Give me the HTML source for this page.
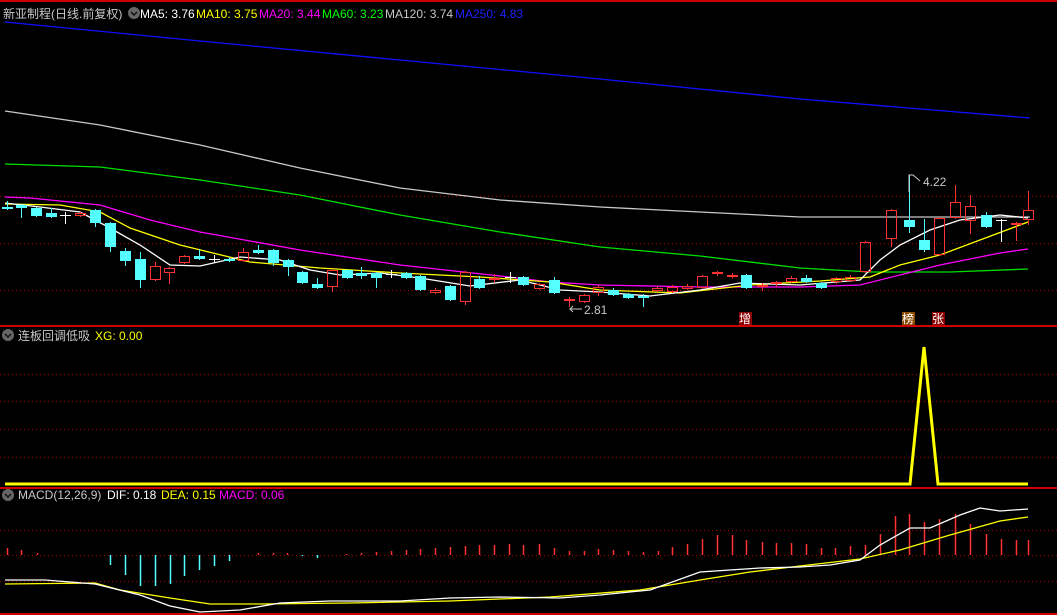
<!DOCTYPE html>
<html><head><meta charset="utf-8">
<style>
html,body{margin:0;padding:0;background:#000;width:1057px;height:615px;overflow:hidden}
svg{display:block}
text{font-family:"Liberation Sans","Noto Sans CJK SC",sans-serif;font-size:12px}
</style></head>
<body>
<svg id="s" width="1057" height="615" xmlns="http://www.w3.org/2000/svg">
<rect width="1057" height="615" fill="#000"/>
<g stroke="#a00" stroke-width="1" stroke-dasharray="1,3">
<line x1="0" y1="196.5" x2="1057" y2="196.5"/>
<line x1="0" y1="243.5" x2="1057" y2="243.5"/>
<line x1="0" y1="290.5" x2="1057" y2="290.5"/>
<line x1="0" y1="374.5" x2="1057" y2="374.5"/>
<line x1="0" y1="401.5" x2="1057" y2="401.5"/>
<line x1="0" y1="429.5" x2="1057" y2="429.5"/>
<line x1="0" y1="457.5" x2="1057" y2="457.5"/>
<line x1="0" y1="530.5" x2="1057" y2="530.5"/>
<line x1="0" y1="555.5" x2="1057" y2="555.5"/>
<line x1="0" y1="581.5" x2="1057" y2="581.5"/>
</g>
<g stroke="#c00" stroke-width="2">
<line x1="0" y1="1" x2="1057" y2="1"/>
<line x1="0" y1="326" x2="1057" y2="326"/>
<line x1="0" y1="488" x2="1057" y2="488"/>
<line x1="0" y1="614" x2="1057" y2="614"/>
</g>
<g fill="none" stroke-width="1.3">
<polyline stroke="#1010ff" points="5,22 200,41 400,60 600,79 800,99 1030,118"/>
<polyline stroke="#c8c8c8" points="5,111 100,125 200,145 300,168 400,188 500,200 600,207 700,212 800,217 900,217 1030,217"/>
<polyline stroke="#00e000" points="5,164 100,167 200,180 300,195 400,215 500,232 600,247 700,256 800,268 870,272 950,272 1028,269"/>
<polyline stroke="#ff00ff" points="5,197 30,198 100,205 150,220 200,232 300,250 400,265 500,276 550,282 600,285 700,287 800,287 860,285 900,275 940,265 1000,253 1028,249"/>
<polyline stroke="#ffff00" points="5,204 60,205 100,212 130,228 180,245 250,262 320,268 400,273 480,277 550,282 600,290 680,293 750,285 820,281 870,277 900,265 940,255 980,240 1028,222"/>
<polyline stroke="#ffffff" points="5,203 40,207 80,212 110,228 140,245 170,265 200,266 240,257 280,260 310,270 340,275 380,273 420,278 470,286 520,280 560,290 600,292 650,296 700,290 740,283 800,285 860,280 880,260 900,245 930,230 960,220 1000,215 1028,218"/>
</g>
<g id="candles"></g>
<g fill="none" stroke="#c8c8c8">
<polyline points="909,192 909,175 913,175 920,181"/>
<polyline points="582,309 570,309 573,306 570,309 573,312"/>
</g>
<text x="923" y="186" fill="#c8c8c8">4.22</text>
<text x="584" y="314" fill="#c8c8c8">2.81</text>
<rect x="739" y="312" width="13" height="13" fill="#8b0000"/>
<text x="739" y="323" fill="#fff">增</text>
<rect x="902" y="312" width="13" height="13" fill="#8b4a00"/>
<text x="902" y="323" fill="#fff">榜</text>
<rect x="932" y="312" width="13" height="13" fill="#8b0000"/>
<text x="932" y="323" fill="#fff">张</text>
<polyline fill="none" stroke="#ffff00" stroke-width="3" points="5,484 910,484 924,347 938,484 1028,484"/>
<g id="macd"></g>
<polyline fill="none" stroke="#ffff00" stroke-width="1.3" points="5,584 95,583 120,590 170,598 210,604 260,604 350,603 450,601 550,597 640,590 700,580 750,572 800,566 860,559 900,550 950,535 1000,521 1028,517"/>
<polyline fill="none" stroke="#ffffff" stroke-width="1.3" points="5,580 45,580 95,584 140,595 170,606 200,612 240,610 280,603 330,601 400,601 450,598 500,597 560,598 600,595 650,590 700,572 760,568 800,567 830,565 860,560 880,545 910,528 930,528 960,515 980,508 1000,511 1028,509"/>
<g>
<circle cx="134" cy="13" r="6" fill="#666"/><path d="M131 12 L134 15 L137 12" stroke="#111" fill="none" stroke-width="1.5"/>
<circle cx="8" cy="335" r="6" fill="#666"/><path d="M5 334 L8 337 L11 334" stroke="#111" fill="none" stroke-width="1.5"/>
<circle cx="8" cy="495" r="6" fill="#666"/><path d="M5 494 L8 497 L11 494" stroke="#111" fill="none" stroke-width="1.5"/>
</g>
<text x="3" y="18" fill="#c8c8c8">新亚制程(日线.前复权)</text>
<text x="140" y="18" fill="#fff">MA5: 3.76</text>
<text x="196" y="18" fill="#ffff00">MA10: 3.75</text>
<text x="259" y="18" fill="#ff00ff">MA20: 3.44</text>
<text x="322" y="18" fill="#00ff00">MA60: 3.23</text>
<text x="385" y="18" fill="#c8c8c8">MA120: 3.74</text>
<text x="455" y="18" fill="#2020ff">MA250: 4.83</text>
<text x="18" y="340" fill="#c8c8c8">连板回调低吸</text>
<text x="95" y="340" fill="#ffff00">XG: 0.00</text>
<text x="18" y="499" fill="#c8c8c8">MACD(12,26,9)</text>
<text x="107" y="499" fill="#fff">DIF: 0.18</text>
<text x="161" y="499" fill="#ffff00">DEA: 0.15</text>
<text x="219" y="499" fill="#ff00ff">MACD: 0.06</text>
</svg>
<script>
var NS="http://www.w3.org/2000/svg";
// x, top, bottom, high, low, type(c=cyan,r=red,x=cross)
var C=[
[7,207,209,201,210,'c'],[21,205,208,204,218,'c'],[36,208,216,207,217,'c'],[51,213,217,208,218,'c'],[65,215,215,212,224,'x'],
[80,213,216,212,217,'r'],[95,210,223,209,227,'c'],[110,223,247,222,252,'c'],[125,251,261,248,266,'c'],[140,259,280,252,288,'c'],
[155,266,280,262,281,'r'],[169,268,273,267,284,'r'],[184,256,263,255,264,'r'],[199,256,259,249,260,'c'],[214,259,259,255,263,'x'],
[229,259,260,257,262,'c'],[243,252,261,248,262,'r'],[258,250,253,245,254,'c'],[273,250,263,249,266,'c'],[288,260,267,259,276,'c'],
[302,272,283,271,284,'c'],[317,284,288,278,289,'c'],[332,270,287,269,292,'r'],[347,270,278,269,279,'c'],[361,273,276,267,279,'c'],
[376,273,278,272,288,'c'],[391,274,274,270,278,'x'],[406,273,278,272,279,'c'],[420,276,290,275,291,'c'],[435,290,293,288,294,'r'],
[450,286,300,285,301,'c'],[465,272,302,271,305,'r'],[479,279,288,276,289,'c'],[494,278,280,274,283,'r'],[510,277,277,272,283,'x'],
[523,277,285,276,286,'c'],[539,284,289,283,290,'r'],[554,280,293,277,294,'c'],[569,299,301,297,307,'r'],[584,295,302,294,303,'r'],
[598,287,293,285,296,'r'],[613,290,295,288,296,'c'],[628,294,298,293,299,'c'],[643,296,298,294,307,'c'],[657,288,291,286,292,'r'],
[672,287,292,285,293,'r'],[687,286,289,284,290,'r'],[702,276,288,275,289,'r'],[717,272,274,271,276,'r'],[732,275,277,273,278,'r'],
[746,275,288,274,289,'c'],[762,285,287,283,291,'r'],[776,282,283,281,287,'r'],[791,278,282,276,283,'r'],[806,278,282,275,283,'c'],
[821,283,288,282,289,'c'],[836,278,282,277,284,'r'],[850,277,281,275,282,'r'],[865,242,272,241,273,'r'],[891,210,239,209,247,'r'],
[909,220,227,175,233,'c'],[924,240,250,219,252,'c'],[939,218,255,217,256,'r'],[955,202,218,185,219,'r'],[970,206,221,195,234,'r'],
[986,215,227,212,228,'c'],[1001,220,220,219,242,'w'],[1016,223,225,222,241,'r'],[1028,210,220,191,225,'r']
];
var g=document.getElementById('candles');
function el(n,a){var e=document.createElementNS(NS,n);for(var k in a)e.setAttribute(k,a[k]);return e;}
C.forEach(function(c){
 var x=c[0],t=c[1],b=c[2],h=c[3],l=c[4],k=c[5];
 var col=k=='c'?'#54ffff':(k=='r'?'#ff3232':'#ffffff');
 if(k=='x'||k=='w'){g.appendChild(el('line',{x1:x+.5,y1:h,x2:x+.5,y2:l,stroke:col}));g.appendChild(el('line',{x1:x-5,y1:t+.5,x2:x+6,y2:t+.5,stroke:col}));return;}
 g.appendChild(el('line',{x1:x+.5,y1:h,x2:x+.5,y2:t,stroke:col}));
 g.appendChild(el('line',{x1:x+.5,y1:b,x2:x+.5,y2:l,stroke:col}));
 if(k=='c')g.appendChild(el('rect',{x:x-5,y:t,width:11,height:Math.max(b-t,2),fill:col}));
 else g.appendChild(el('rect',{x:x-4.5,y:t+.5,width:10,height:Math.max(b-t-1,1),fill:'none',stroke:col}));
});
var M=[[7,548],[21,550],[37,553],[110,565],[125,575],[140,586],[155,586],[170,584],[184,576],[199,570],[214,566],[229,561],
[258,553],[273,553],[287,553],[302,556],[317,558],[331,555],[346,554],[361,553],[376,552],[391,551],[406,550],[420,549],[435,548],[450,547],[465,546],[479,545],[494,545],[509,544],[523,545],
[539,544],[554,548],[569,551],[584,551],[598,549],[613,550],[628,551],[643,552],[658,551],[672,547],[687,544],[702,539],[717,535],[732,535],[746,540],[762,542],[776,543],[791,543],[806,544],[821,548],[835,548],[850,546],[865,545],[880,534],[895,516],[909,514],[924,522],[939,519],[955,514],[970,524],[986,534],[1001,539],[1016,540],[1028,540]];
var m=document.getElementById('macd');
M.forEach(function(p){var up=p[1]<555;m.appendChild(el('line',{x1:p[0]+.5,y1:555,x2:p[0]+.5,y2:p[1],stroke:up?'#ff3232':'#54ffff','stroke-width':1.5}));});
</script>
</body></html>
